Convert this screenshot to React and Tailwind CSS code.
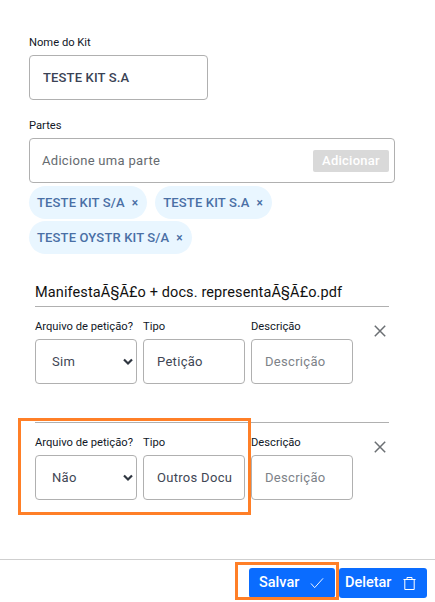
import React from "react";

const labelCls = "block text-[11.2px] leading-[14px] text-[#111827]";
const fieldCls =
  "h-[45px] w-[102px] rounded-[4px] border border-[#b0b0b0] bg-white pl-[13px] pr-[2px] text-[13px] text-[#3f4654] outline-none tracking-[0.3px] placeholder:text-[#7d8288]";

function Chip({ children }) {
  return (
    <span className="inline-flex h-[33px] items-center gap-[7px] rounded-full bg-[#e9f6ff] pl-[8px] pr-[9px] text-[13px] font-medium tracking-[0.15px] text-[#4a6fa5]">
      {children}
      <span className="text-[12px] leading-none text-[#4a6fa5]">×</span>
    </span>
  );
}

function FileRow({ answer, type }) {
  return (
    <div className="flex items-start">
      <div className="w-[108px]">
        <label className={labelCls}>Arquivo de petição?</label>
        <div className="relative mt-[5px] h-[45px] w-[102px] rounded-[4px] border border-[#b0b0b0] bg-white">
          <span className="absolute left-[16px] top-[14px] text-[13px] leading-[16px] tracking-[0.3px] text-[#3f4654]">
            {answer}
          </span>
          <svg
            className="absolute right-[3px] top-[18px]"
            width="10"
            height="8"
            viewBox="0 0 10 8"
            fill="none"
            stroke="#2f3640"
            strokeWidth="2.2"
          >
            <path d="M1 1.5 L5 5.5 L9 1.5" />
          </svg>
        </div>
      </div>
      <div className="w-[108px]">
        <label className={labelCls}>Tipo</label>
        <input readOnly value={type} className={`${fieldCls} mt-[5px] block`} />
      </div>
      <div className="w-[102px]">
        <label className={labelCls}>Descrição</label>
        <input readOnly placeholder="Descrição" className={`${fieldCls} mt-[5px] block`} />
      </div>
      <svg
        className="ml-[21px] mt-[5px]"
        width="12"
        height="12"
        viewBox="0 0 12 12"
        fill="none"
        stroke="#6b6f73"
        strokeWidth="1.5"
      >
        <path d="M0.8 0.8 L11.2 11.2 M11.2 0.8 L0.8 11.2" />
      </svg>
    </div>
  );
}

export default function App() {
  return (
    <div className="relative flex h-[602px] w-[435px] flex-col overflow-hidden bg-white font-['Roboto',sans-serif]">
      <div className="flex-1 pl-[29px] pr-[40px] pt-[36px]">
        <label className={labelCls}>Nome do Kit</label>
        <input
          readOnly
          value="TESTE KIT S.A"
          className="mt-[5px] block h-[45px] w-[179px] rounded-[4px] border border-[#b0b0b0] bg-white px-[13px] text-[13px] font-medium tracking-[0.15px] text-[#3a4254] outline-none"
        />

        <label className={`${labelCls} mt-[19px]`}>Partes</label>
        <div className="mt-[5px] flex h-[45px] w-[366px] items-center justify-between rounded-[4px] border border-[#b0b0b0] bg-white pl-[12px] pr-[5px]">
          <span className="text-[13px] tracking-[0.3px] text-[#666b70]">Adicione uma parte</span>
          <span className="flex h-[22px] w-[76px] items-center justify-center rounded-[2px] bg-[#d9d9d9] text-[13px] font-medium tracking-[0.25px] text-white">
            Adicionar
          </span>
        </div>

        <div className="mt-[3px] flex w-[366px] flex-wrap gap-x-[8px] gap-y-[2px]">
          <Chip>TESTE KIT S/A</Chip>
          <Chip>TESTE KIT S.A</Chip>
          <Chip>TESTE OYSTR KIT S/A</Chip>
        </div>

        <div className="ml-[6px] mt-[28px] w-[354px]">
          <div className="border-b border-[#b0b0b0] pb-[3px] text-[14.5px] leading-[21px] tracking-[0.12px] text-[#111]">
            ManifestaÃ§Ã£o + docs. representaÃ§Ã£o.pdf
          </div>
          <div className="mt-[13px]">
            <FileRow answer="Sim" type="Petição" />
          </div>
          <div className="mt-[38px] border-t border-[#b0b0b0] pt-[13px]">
            <FileRow answer="Não" type="Outros Docu" />
          </div>
        </div>
      </div>

      <div className="flex h-[43px] items-start justify-end gap-[4px] border-t border-[#cfcfcf] pr-[8px] pt-[8px]">
        <button className="flex h-[30px] w-[86px] items-center gap-[11px] rounded-[3px] bg-[#0a6cff] pl-[10px] text-[14.5px] font-medium text-white">
          Salvar
          <svg width="14" height="12" viewBox="0 0 15 12" fill="none" stroke="#fff" strokeWidth="1">
            <path d="M1 6.5 L5 11 L14 1" />
          </svg>
        </button>
        <button className="flex h-[30px] w-[88px] items-center gap-[12px] rounded-[3px] bg-[#0a6cff] pl-[6px] text-[14.5px] font-medium text-white">
          Deletar
          <svg width="13" height="13" viewBox="0 0 13 13" fill="none" stroke="#fff" strokeWidth="1">
            <path d="M0.5 2.5 H12.5 M4 2.5 V0.5 H9 V2.5 M1.8 2.5 V12.5 H11.2 V2.5" />
          </svg>
        </button>
      </div>

      <div className="pointer-events-none absolute left-[18px] top-[418px] h-[97px] w-[233px] border-[3px] border-[#ff7f27]" />
      <div className="pointer-events-none absolute left-[235px] top-[562px] h-[38px] w-[104px] border-[3px] border-[#ff7f27]" />
    </div>
  );
}
